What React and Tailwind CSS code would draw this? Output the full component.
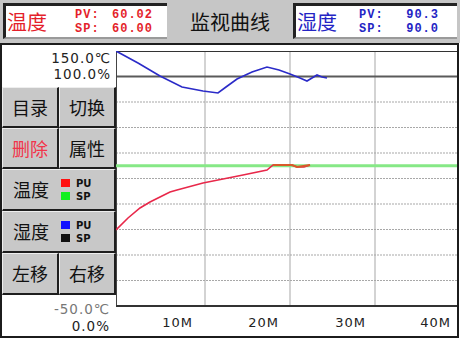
import React from "react";

const CJK = { fontFamily: '"Noto Sans CJK SC", sans-serif' };

const blue = [
  [0, 0], [22, 12], [44, 25], [66, 36], [87, 40], [102, 42], [110, 36],
  [121, 28], [136, 21], [151, 16], [163, 19], [174, 23], [184, 27],
  [191, 30], [196, 27], [201, 24], [206, 26], [211, 27],
];
const red = [
  [0, 179], [12, 167], [24, 157], [34, 151], [44, 146], [54, 141], [61, 139],
  [87, 132], [127, 124], [151, 119], [157, 114], [176, 114], [181, 116],
  [188, 116], [194, 114],
];

const pts = (a) => a.map((p) => p.join(",")).join(" ");

const Btn = ({ children, className = "" }) => (
  <div
    className={`flex items-center justify-center bg-[#c8c8c8] border-t border-l border-[#eeeeee] border-r-2 border-b-2 border-r-[#1e1e1e] border-b-[#1e1e1e] text-[18px] text-[#111] ${className}`}
    style={CJK}
  >
    {children}
  </div>
);

const Legend = ({ label, a, b }) => (
  <Btn className="h-[42px] justify-start pl-[10px] gap-[12px]">
    <span>{label}</span>
    <div className="flex flex-col gap-[2px] font-['DejaVu_Sans'] text-[10px] font-bold leading-[11px]">
      <div className="flex items-center gap-[6px]">
        <span className={`w-[9px] h-[8px] ${a}`}></span>PU
      </div>
      <div className="flex items-center gap-[6px]">
        <span className={`w-[9px] h-[8px] ${b}`}></span>SP
      </div>
    </div>
  </Btn>
);

const Readout = ({ name, pv, sp, color, gap }) => (
  <div className="h-[36px] w-[164px] mt-[3px] bg-white border-t-[3px] border-l-[3px] border-[#222] border-b-2 border-b-[#9a9a9a] flex items-center">
    <span className={`text-[20px] pl-[1px] ${color}`} style={CJK}>
      {name}
    </span>
    <div
      className={`flex flex-col font-['Liberation_Mono'] font-bold text-[12px] leading-[14px] tracking-[1px] ${color} ${gap}`}
    >
      <div className="flex">
        <span>PV:</span>
        <span className="flex-1 text-right">{pv}</span>
      </div>
      <div className="flex">
        <span>SP:</span>
        <span className="flex-1 text-right">{sp}</span>
      </div>
    </div>
  </div>
);

const Chart = () => {
  const rows = [2, 3, 4, 5, 6, 7, 8, 9];
  return (
    <svg width="341" height="256" viewBox="0 0 341 256">
      {[89, 174, 259].map((x) => (
        <line key={x} x1={x} y1="0" x2={x} y2="256" stroke="#c4c4c4" strokeWidth="1.5" />
      ))}
      {rows.map((k) => (
        <line
          key={k}
          x1="0"
          y1={k * 25.5}
          x2="341"
          y2={k * 25.5}
          stroke="#a8a8a8"
          strokeWidth="1.2"
          strokeDasharray="2 1"
        />
      ))}
      <line x1="0" y1="25.5" x2="341" y2="25.5" stroke="#5a5a5a" strokeWidth="2" />
      <line x1="0" y1="0.5" x2="341" y2="0.5" stroke="#333" strokeWidth="1" />
      <line x1="0.5" y1="0" x2="0.5" y2="256" stroke="#444" strokeWidth="1" />
      <line x1="0" y1="255" x2="341" y2="255" stroke="#333" strokeWidth="2" />
      <line x1="0" y1="114.7" x2="341" y2="114.7" stroke="#86e886" strokeWidth="3" />
      <polyline points={pts(blue)} fill="none" stroke="#2b2bc8" strokeWidth="1.6" />
      <polyline points={pts(red)} fill="none" stroke="#e8284a" strokeWidth="1.6" />
      <polyline points="157,114 176,114 181,116 194,114" fill="none" stroke="#d85a2a" strokeWidth="2" />
    </svg>
  );
};

export default function App() {
  return (
    <div className="w-[460px] h-[338px] bg-white overflow-hidden font-['DejaVu_Sans'] text-[#222]">
      {/* header */}
      <div className="h-[43px] bg-[#c6c6c6] flex pl-[3px]">
        <Readout name="温度" pv="60.02" sp="60.00" color="text-[#e41f2b]" gap="ml-[28px] w-[78px]" />
        <div className="w-[126px] flex items-center justify-center text-[20px] text-[#111] pt-[1px]" style={CJK}>
          监视曲线
        </div>
        <Readout name="湿度" pv="90.3" sp="90.0" color="text-[#2424c4]" gap="ml-[22px] w-[80px]" />
      </div>

      {/* body */}
      <div className="h-[295px] w-[459px] border-t-2 border-l-2 border-r-2 border-b-2 border-[#1c1c1c] flex">
        <div className="w-[114px] flex flex-col">
          <div className="h-[42px] pt-[5px] pr-[5px] text-right text-[13.5px] leading-[16px] tracking-[1px]">
            <div>150.0℃</div>
            <div>100.0%</div>
          </div>
          <div className="grid grid-cols-2">
            <Btn className="h-[41px]">目录</Btn>
            <Btn className="h-[41px]">切换</Btn>
            <Btn className="h-[41px] text-[#f2344a]">删除</Btn>
            <Btn className="h-[41px]">属性</Btn>
          </div>
          <Legend label="温度" a="bg-[#ff1010]" b="bg-[#10f020]" />
          <Legend label="湿度" a="bg-[#1010ff]" b="bg-[#111]" />
          <div className="grid grid-cols-2">
            <Btn className="h-[42px]">左移</Btn>
            <Btn className="h-[42px]">右移</Btn>
          </div>
          <div className="pt-[6px] pr-[6px] text-right text-[13.5px] leading-[16px] tracking-[1px]">
            <div className="text-[#777]">-50.0℃</div>
            <div className="mt-[1px]">0.0%</div>
          </div>
        </div>

        <div className="w-[341px] flex flex-col pt-[6px]">
          <Chart />
          <div className="flex text-[13px] tracking-[1px] pt-[9px] leading-[14px]">
            <div className="w-[89px] text-right pr-[12px]">10M</div>
            <div className="w-[85px] text-right pr-[11px]">20M</div>
            <div className="w-[85px] text-right pr-[9px]">30M</div>
            <div className="w-[82px] text-right pr-[6px]">40M</div>
          </div>
        </div>
      </div>
    </div>
  );
}
